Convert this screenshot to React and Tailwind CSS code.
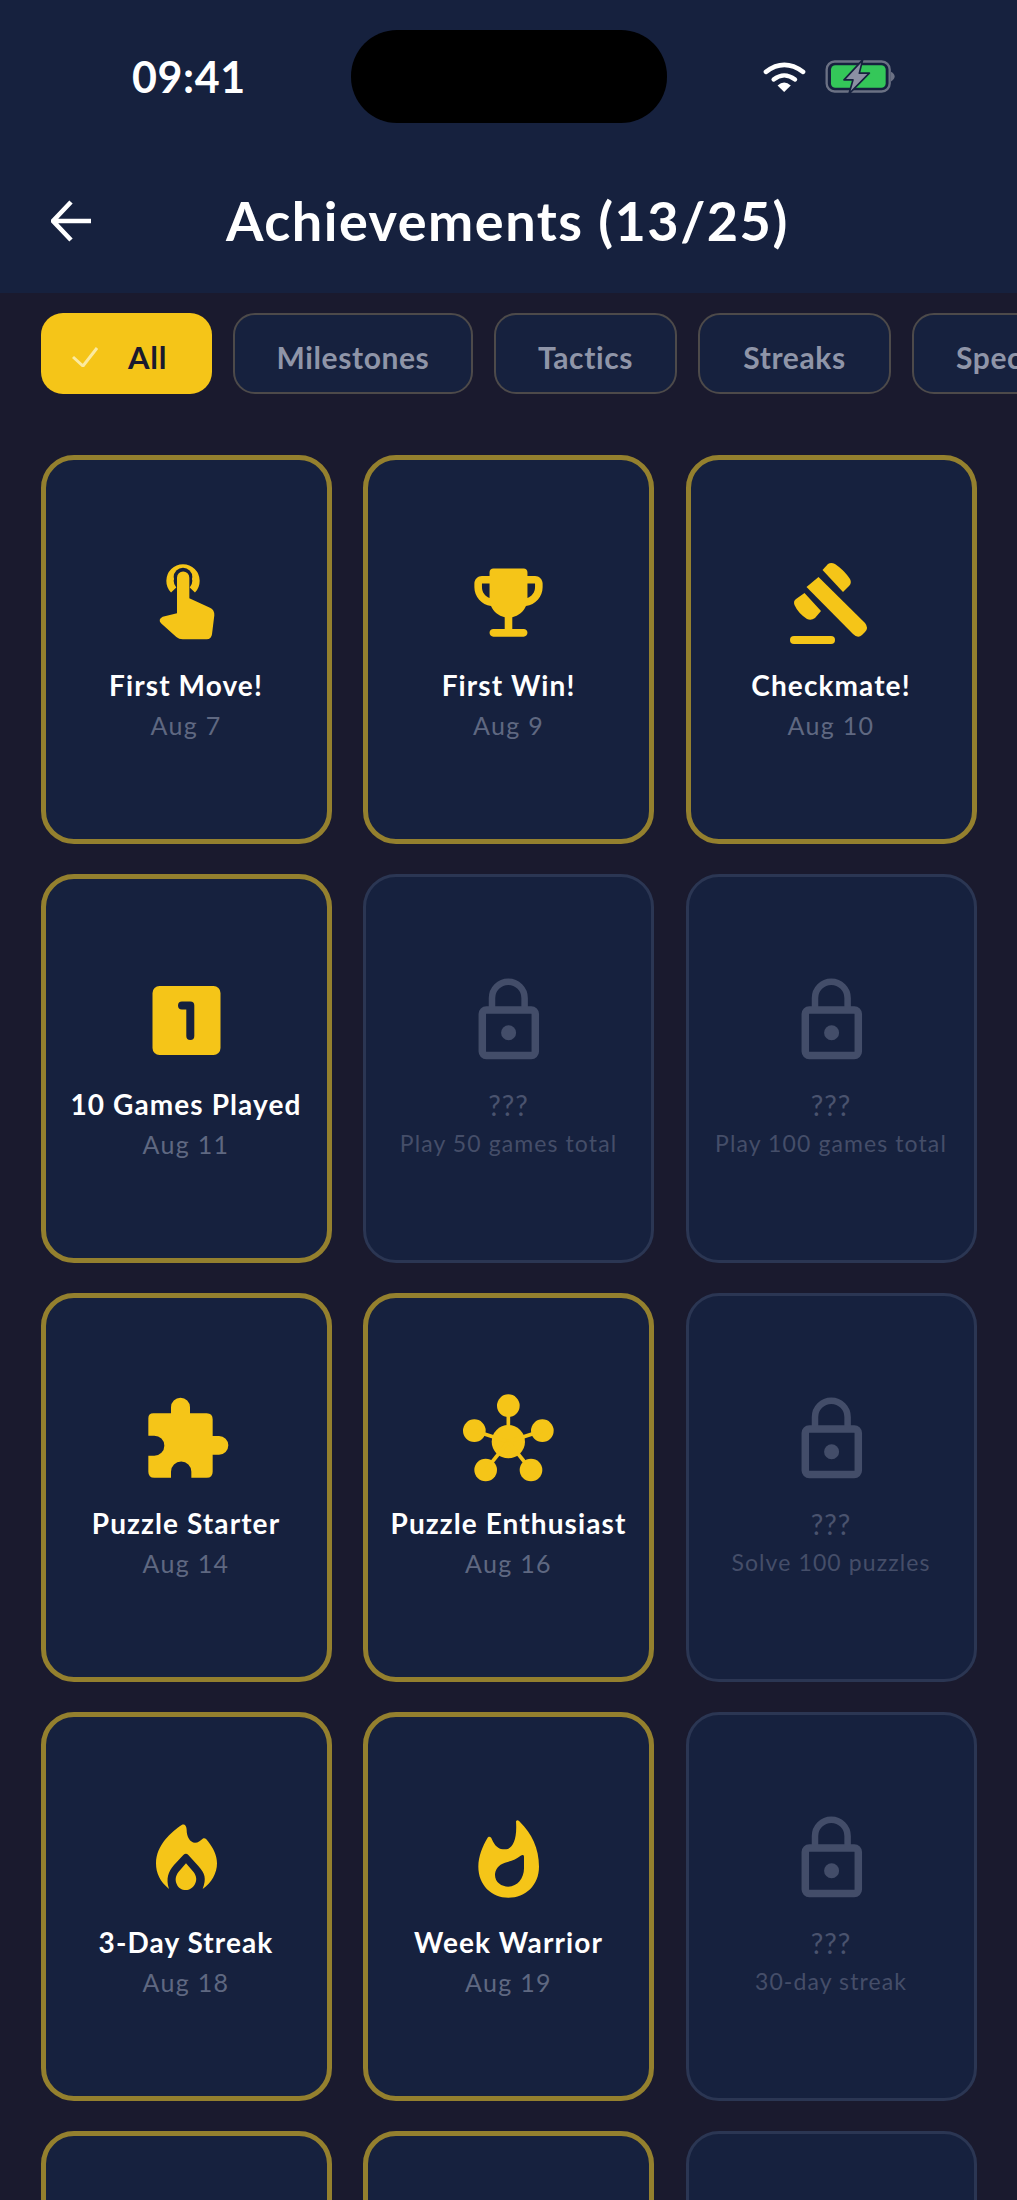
const GOLD = "#f5c518";
const CARD = "#16213e";

const Hand = () => (
  <svg viewBox="333 321 273 273" className="w-[91px] h-[91px] overflow-visible">
    <path d="M431 420 A39 39 0 1 1 487 420" fill="none" stroke={GOLD} strokeWidth="22" />
    <circle cx="459" cy="381" r="28" fill={CARD} />
    <path fill={GOLD} d="M441 383 a18 18 0 0 1 37 0 L478 445 L540 473 Q554 480 553 496 L546 553 Q544 568 530 568 L458 568 Q447 568 439 561 L393 520 Q383 508 398 500 L441 490 Z" />
  </svg>
);

const Trophy = () => (
  <svg viewBox="0 0 24 24" className="w-[91px] h-[91px]">
    <path fill={GOLD} d="M19 5h-2V4c0-.55-.45-1-1-1H8c-.55 0-1 .45-1 1v1H5c-1.1 0-2 .9-2 2v1c0 2.55 1.92 4.63 4.39 4.94.63 1.5 1.98 2.63 3.61 2.96V19H8c-.55 0-1 .45-1 1s.45 1 1 1h8c.55 0 1-.45 1-1s-.45-1-1-1h-3v-3.1c1.63-.33 2.98-1.46 3.61-2.96C19.08 12.63 21 10.55 21 8V7c0-1.1-.9-2-2-2zM5 8V7h2v3.82C5.84 10.4 5 9.3 5 8zm14 0c0 1.3-.84 2.4-2 2.82V7h2v1z" />
  </svg>
);

const Gavel = () => (
  <svg viewBox="785 557 91 91" className="w-[91px] h-[91px] overflow-visible">
    <rect x="789" y="636" width="45" height="8" rx="4" fill={GOLD} />
    <path fill={GOLD} d="M805.5 587 L817.5 577 L864 623 Q868 628 864 632 L861 635 Q857 639 852 634 Z" />
    <path fill={GOLD} d="M821.5 570 L827 564 Q830 562 834 564 Q843 570 849 579 Q851 583 848 586 L842 592 Z" />
    <path fill={GOLD} d="M803.5 593 L820 611 L814 618 Q810 621 806 619 Q797 613 793.5 605 Q792 601 795 599 Z" />
  </svg>
);

const One = () => (
  <svg viewBox="141 976 91 91" className="w-[91px] h-[91px]">
    <rect x="152.5" y="986" width="68" height="69" rx="7" fill={GOLD} />
    <path d="M182 1005.5 L190.3 1005.5 L190.3 1036" fill="none" stroke={CARD} strokeWidth="8" strokeLinecap="round" strokeLinejoin="round" />
  </svg>
);

const Lock = () => (
  <svg viewBox="463 976 91 91" className="w-[91px] h-[91px]">
    <rect x="482.3" y="1010" width="53" height="45.5" rx="4" fill="none" stroke="#434d69" strokeWidth="7.5" />
    <path d="M492 1008 V998 a16.3 16.3 0 0 1 32.6 0 V1008" fill="none" stroke="#434d69" strokeWidth="6.5" />
    <ellipse cx="508.6" cy="1032.7" rx="7.5" ry="7.5" fill="#434d69" />
  </svg>
);

const Puzzle = () => (
  <svg viewBox="123 75 273 273" className="w-[91px] h-[91px]">
    <path fill={GOLD} d="M160 130 L213 130 L213 112 A28.5 28.5 0 0 1 270 112 L270 130 L320 130 Q338 130 338 148 L338 198 L357 198 A28 28 0 0 1 357 254 L338 254 L338 305 Q338 323 320 323 L274 323 L274 305 A30.5 30.5 0 0 0 213 305 L213 323 L163 323 Q145 323 145 305 L145 257 L163 257 A30 30 0 0 0 163 197 L145 197 L145 145 Q145 130 160 130 Z" />
  </svg>
);

const Hub = () => (
  <svg viewBox="1089 75 273 273" className="w-[91px] h-[91px] overflow-visible">
    <g fill={GOLD}>
      <circle cx="1225" cy="215" r="50" />
      <circle cx="1225" cy="107" r="34" />
      <circle cx="1123" cy="182" r="34" />
      <circle cx="1327" cy="182" r="34" />
      <circle cx="1157" cy="300" r="34" />
      <circle cx="1293" cy="300" r="34" />
    </g>
    <g stroke={GOLD} strokeWidth="11">
      <line x1="1225" y1="215" x2="1225" y2="107" />
      <line x1="1225" y1="215" x2="1123" y2="182" />
      <line x1="1225" y1="215" x2="1327" y2="182" />
      <line x1="1225" y1="215" x2="1157" y2="300" />
      <line x1="1225" y1="215" x2="1293" y2="300" />
    </g>
  </svg>
);

const Fire = () => (
  <svg viewBox="123 72 273 273" className="w-[91px] h-[91px]">
    <path fill={GOLD} d="M207 297 C180 275 168 250 168 220 C168 165 215 125 245 105 C255 100 260 110 260 120 C260 140 270 158 285 158 C295 158 300 152 308 146 C315 142 320 148 325 155 C340 175 351 195 351 220 C351 250 335 278 308 297 C320 265 315 250 295 228 L265 195 Q258 188 250 195 L222 225 C205 245 197 265 207 297 Z" />
    <path fill={GOLD} d="M258 220 L280 245 C290 258 291 270 285 282 C278 295 268 300 258 300 C245 300 235 295 230 282 C225 270 226 258 236 245 Z" />
  </svg>
);

const Whatshot = () => (
  <svg viewBox="1089 72 273 273" className="w-[91px] h-[91px]">
    <path fill={GOLD} fillRule="evenodd" d="M1248 94 C1252 88 1256 92 1260 96 C1295 130 1317 175 1317 230 C1317 285 1277 323 1225 323 C1175 323 1135 285 1135 230 C1135 200 1148 168 1162 145 C1166 138 1172 140 1175 146 C1185 170 1197 178 1215 178 C1238 178 1252 150 1248 94 Z M1272 200 C1272 195 1268 193 1262 197 C1248 208 1235 213 1215 218 C1195 224 1185 240 1185 255 C1185 277 1205 290 1225 290 C1252 290 1272 265 1272 235 Z" />
  </svg>
);

const Wifi = () => (
  <svg viewBox="66 88 136 104" className="w-[45px] h-[35px]">
    <path d="M78 126 Q133 84 190 126" fill="none" stroke="#fff" strokeWidth="14" strokeLinecap="round" />
    <path d="M101 149 Q133 124 166 149" fill="none" stroke="#fff" strokeWidth="13" strokeLinecap="round" />
    <path d="M113 167 Q133 150 153 167 L133 187 Z" fill="#fff" />
  </svg>
);

const Battery = () => (
  <svg viewBox="250 88 216 104" className="w-[72px] h-[35px]">
    <rect x="258" y="95" width="189" height="90" rx="24" fill="none" stroke="#6b7184" strokeWidth="7" />
    <rect x="271" y="106" width="164" height="68" rx="13" fill="#34c759" />
    <path d="M451 126 Q462 132 462 140 Q462 148 451 155 Z" fill="#6b7184" />
    <path d="M366 90 L310 150 L337 150 L325 192 L386 130 L356 130 Z" fill="#8b90a3" stroke={CARD} strokeWidth="5" strokeLinejoin="round" />
  </svg>
);

const Check = () => (
  <svg viewBox="0 0 26 20" className="w-[26px] h-[20px] mr-[30px]">
    <path d="M1 10 L11 19 L25 1" fill="none" stroke="#fbeaa0" strokeWidth="3" />
  </svg>
);

const Unlocked = ({ icon, title, date }) => (
  <div className="h-[389px] rounded-[33px] border-[5px] border-[#94802e] bg-[#16213e] flex flex-col items-center justify-center">
    <div className="h-[91px] mb-[18.5px]">{icon}</div>
    <div className="h-[36px] leading-[36px] text-[28px] font-bold tracking-[1.1px] text-white whitespace-nowrap">{title}</div>
    <div className="h-[32px] mt-[6px] mb-[1.5px] leading-[32px] text-[25px] tracking-[1.3px] text-[#5f6881] whitespace-nowrap">{date}</div>
  </div>
);

const Locked = ({ hint }) => (
  <div className="h-[389px] rounded-[33px] border-[3px] border-[#2b3653] bg-[#16213e] flex flex-col items-center justify-center">
    <div className="h-[91px] mb-[20px]"><Lock /></div>
    <div className="h-[36px] leading-[36px] text-[28px] font-normal tracking-[1px] text-[#4a536e] whitespace-nowrap">???</div>
    <div className="h-[32px] mt-[4px] mb-[2px] leading-[32px] text-[23px] tracking-[1.1px] text-[#454e69] whitespace-nowrap">{hint}</div>
  </div>
);

const Blank = ({ locked }) => (
  <div className={locked
    ? "h-[389px] rounded-[33px] border-[3px] border-[#2b3653] bg-[#16213e]"
    : "h-[389px] rounded-[33px] border-[5px] border-[#94802e] bg-[#16213e]"} />
);

const Pill = ({ w, children }) => (
  <div className={`${w} h-[81px] shrink-0 rounded-[22px] border-[2.5px] border-[#4d4a4a] bg-[#16213e] flex items-center justify-center pt-[7px] text-[30px] font-bold text-[#8f95a8] tracking-[0.6px]`}>
    {children}
  </div>
);

export default function App() {
  return (
    <div className="w-[1017px] h-[2200px] overflow-hidden bg-[#1a1a2e]" style={{ fontFamily: '"Lato", "Noto Sans", sans-serif' }}>
      <header className="h-[293px] bg-[#16213e] pt-[30px]">
        <div className="flex items-center h-[93px]">
          <div className="w-[351px] pl-[132px] text-[43px] leading-none font-bold text-white tracking-[0.6px]">09:41</div>
          <div className="w-[316px] h-[93px] rounded-[46px] bg-black" />
          <div className="flex items-center pl-[95px] gap-[17px]">
            <Wifi />
            <Battery />
          </div>
        </div>
        <div className="flex items-center h-[60px] mt-[68px] pl-[51px]">
          <svg viewBox="0 0 41 42" className="w-[41px] h-[42px]">
            <path d="M40 21 H3 M20 2 L2 21 L20 40" fill="none" stroke="#fff" strokeWidth="4.6" />
          </svg>
          <div className="ml-[134px] text-[54px] leading-none font-bold text-white tracking-[1.5px] whitespace-nowrap">Achievements (13/25)</div>
        </div>
      </header>

      <div className="flex gap-[21px] pl-[41px] pt-[20px] overflow-hidden">
        <div className="w-[171px] h-[81px] shrink-0 rounded-[22px] bg-[#f5c518] flex items-center pl-[31px] pt-[7px] text-[31px] font-bold tracking-[0.8px] text-[#1a1a2e]">
          <Check />All
        </div>
        <Pill w="w-[240px]">Milestones</Pill>
        <Pill w="w-[183px]">Tactics</Pill>
        <Pill w="w-[193px]">Streaks</Pill>
        <Pill w="w-[200px]">Specials</Pill>
      </div>

      <main className="grid grid-cols-3 gap-x-[31.5px] gap-y-[30px] px-[40.5px] mt-[61px]">
        <Unlocked icon={<Hand />} title="First Move!" date="Aug 7" />
        <Unlocked icon={<Trophy />} title="First Win!" date="Aug 9" />
        <Unlocked icon={<Gavel />} title="Checkmate!" date="Aug 10" />
        <Unlocked icon={<One />} title="10 Games Played" date="Aug 11" />
        <Locked hint="Play 50 games total" />
        <Locked hint="Play 100 games total" />
        <Unlocked icon={<Puzzle />} title="Puzzle Starter" date="Aug 14" />
        <Unlocked icon={<Hub />} title="Puzzle Enthusiast" date="Aug 16" />
        <Locked hint="Solve 100 puzzles" />
        <Unlocked icon={<Fire />} title="3-Day Streak" date="Aug 18" />
        <Unlocked icon={<Whatshot />} title="Week Warrior" date="Aug 19" />
        <Locked hint="30-day streak" />
        <Blank />
        <Blank />
        <Blank locked />
      </main>
    </div>
  );
}
